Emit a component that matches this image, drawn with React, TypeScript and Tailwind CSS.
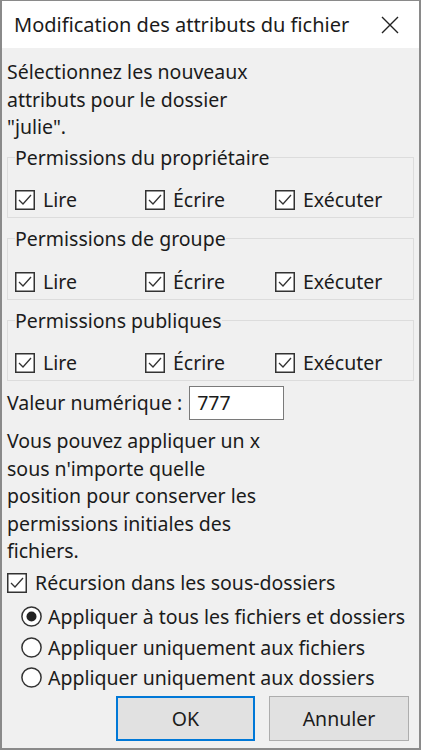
import type { ReactNode } from "react";

const font = { fontFamily: '"Noto Sans", "Open Sans", sans-serif' };

const CheckBox = () => (
  <svg width="20" height="20" viewBox="0 0 20 20" className="shrink-0">
    <rect x="0.75" y="0.75" width="18.5" height="18.5" fill="#fff" stroke="#333" strokeWidth="1.5" />
    <polyline points="4,10 8,14 16,5" fill="none" stroke="#333" strokeWidth="1.3" />
  </svg>
);

const Radio = ({ checked }: { checked?: boolean }) => (
  <svg width="21" height="21" viewBox="0 0 21 21" className="shrink-0">
    <circle cx="10.5" cy="10.5" r="9.6" fill="#fff" stroke="#333" strokeWidth="1.5" />
    {checked && <circle cx="10.5" cy="10.5" r="5" fill="#222" />}
  </svg>
);

const Check = ({ label }: { label: string }) => (
  <div className="flex w-[130px] items-center gap-[8px]">
    <CheckBox />
    <span>{label}</span>
  </div>
);

const Group = ({ title, children }: { title: string; children: ReactNode }) => (
  <fieldset className="border border-[#dcdcdc] px-[7px] pt-[15px] pb-[3px]">
    <legend className="px-0">{title}</legend>
    <div className="flex h-[28px] items-center">{children}</div>
  </fieldset>
);

const Perms = () => (
  <>
    <Check label="Lire" />
    <Check label="Écrire" />
    <Check label="Exécuter" />
  </>
);

export default function App() {
  return (
    <div
      style={font}
      className="flex h-[750px] w-[421px] flex-col border-x-2 border-b-2 border-t border-[#8a8a8a] text-[19.5px] leading-[27.5px] text-[#1b1b1b]"
    >
      <div className="flex h-[47px] shrink-0 items-center justify-between bg-white pl-[12px] pr-[20px]">
        <span className="text-[20px]">Modification des attributs du fichier</span>
        <svg width="18" height="18" viewBox="0 0 18 18">
          <path d="M1 1 L17 17 M17 1 L1 17" stroke="#222" strokeWidth="1.4" />
        </svg>
      </div>

      <div className="flex flex-1 flex-col bg-[#f0f0f0] px-[5px] pt-[10px]">
        <p className="mb-[3px]">
          Sélectionnez les nouveaux
          <br />
          attributs pour le dossier
          <br />
          "julie".
        </p>

        <div className="flex flex-col gap-[7px]">
          <Group title="Permissions du propriétaire">
            <Perms />
          </Group>
          <Group title="Permissions de groupe">
            <Perms />
          </Group>
          <Group title="Permissions publiques">
            <Perms />
          </Group>
        </div>

        <div className="mt-[4px] flex h-[35px] items-center gap-[7px]">
          <span>Valeur numérique :</span>
          <div className="flex h-[34px] w-[95px] items-center border border-[#7a7a7a] bg-white px-[7px]">
            777
          </div>
        </div>

        <p className="mt-[7px]">
          Vous pouvez appliquer un x
          <br />
          sous n'importe quelle
          <br />
          position pour conserver les
          <br />
          permissions initiales des
          <br />
          fichiers.
        </p>

        <div className="mt-[4px] flex h-[28px] items-center gap-[8px]">
          <CheckBox />
          <span>Récursion dans les sous-dossiers</span>
        </div>

        <div className="mt-[5px] flex flex-col pl-[14px]">
          <div className="flex h-[30.5px] items-center gap-[6px]">
            <Radio checked />
            <span>Appliquer à tous les fichiers et dossiers</span>
          </div>
          <div className="flex h-[30.5px] items-center gap-[6px]">
            <Radio />
            <span>Appliquer uniquement aux fichiers</span>
          </div>
          <div className="flex h-[30.5px] items-center gap-[6px]">
            <Radio />
            <span>Appliquer uniquement aux dossiers</span>
          </div>
        </div>

        <div className="mt-[3px] flex justify-end gap-[14px] pr-[5px]">
          <button className="h-[45px] w-[139px] border-2 border-[#0078d7] bg-[#e1e1e1]">OK</button>
          <button className="h-[45px] w-[140px] border border-[#adadad] bg-[#e1e1e1]">Annuler</button>
        </div>
      </div>
    </div>
  );
}
